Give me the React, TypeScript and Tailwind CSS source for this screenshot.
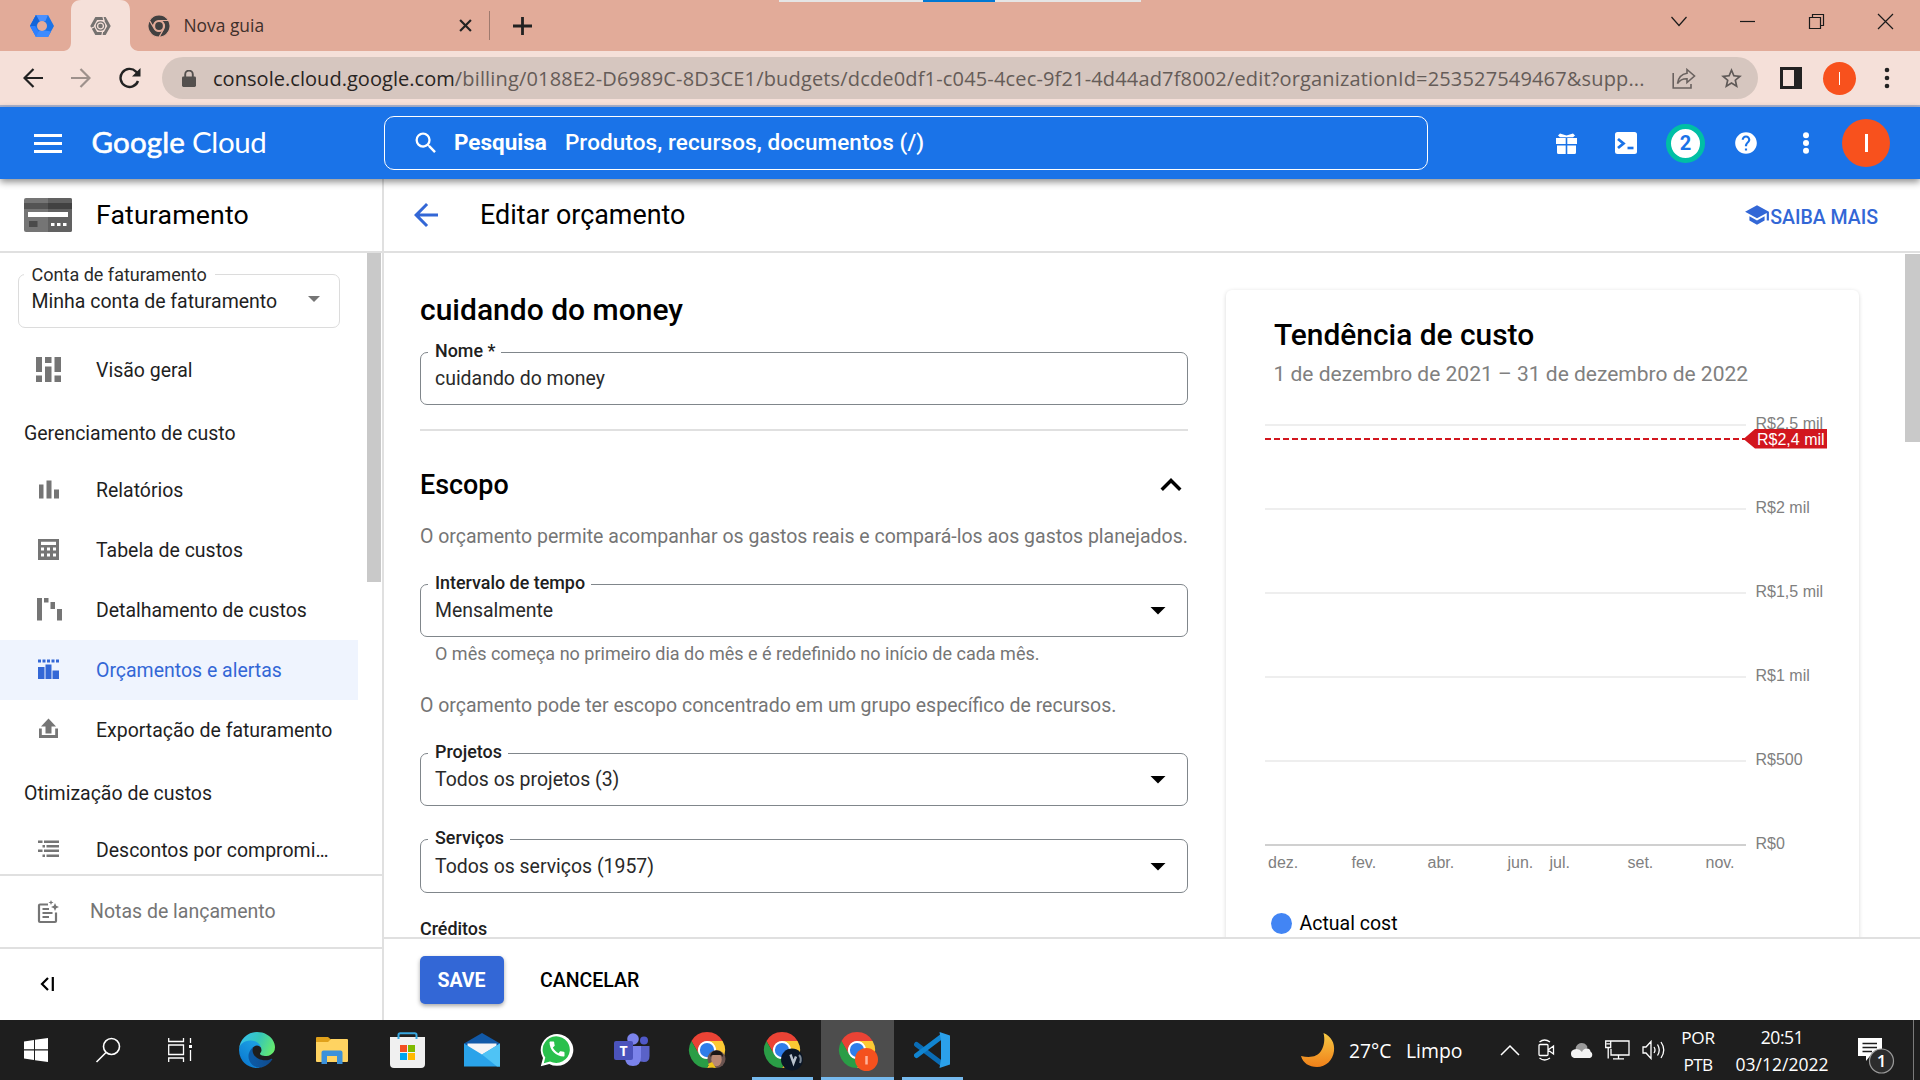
import type { ReactNode } from 'react';
import { MdArrowBack, MdArrowDropDown, MdExpandLess, MdHelp, MdSchool, MdSearch, MdStarBorder, MdCall } from 'react-icons/md';

/* ---------- Browser chrome ---------- */

function CloudHexIcon() {
  return (
    <svg width="24" height="22" viewBox="0 0 24 22">
      <path d="M6 0H18L24 11L18 22H6L0 11Z" fill="#1a73e8" />
      <path d="M6 0H18L15.5 6H8.5L3 5.5Z" fill="#4a90ff" />
      <path d="M0 11L6 22H12L5 11L8.5 5L6 0Z" fill="#2f80ff" />
      <path d="M6 22H18L21 16.5L15 15.5H9Z" fill="#3d8bff" />
      <path d="M0 11L6 0L9.5 6L6 11Z" fill="#1565d8" />
      <circle cx="12" cy="11" r="5" fill="#e2ab99" />
    </svg>
  );
}

function GrayHexIcon() {
  return (
    <svg width="21" height="18" viewBox="0 0 21 18">
      <path d="M6.2 1.5H14.8L19 9L14.8 16.5H6.2L2 9Z" fill="none" stroke="#757270" strokeWidth="3" />
      <path d="M0 12L4 10M13 0L14.200 4M12 18L12.700 14" stroke="#f5e0d9" strokeWidth="1.2" />
      <circle cx="10.5" cy="9" r="4.200" fill="none" stroke="#757270" strokeWidth="1.2" />
      <circle cx="10.5" cy="9" r="2.300" fill="#757270" />
    </svg>
  );
}

const RED = 'M24 12H44.7812a23.9939 23.9939 0 0 0-41.5639.0029L13.6079 30l.0093-.0024A11.9852 11.9852 0 0 1 24 12Z';
const YELLOW = 'M34.3913 30.0029 24.0007 48A23.994 23.994 0 0 0 44.78 12.0031H23.9989l-.0025.0093A11.985 11.985 0 0 1 34.3913 30.0029Z';
const GREEN = 'M13.6086 30.0031 3.218 12.006A23.994 23.994 0 0 0 24.0025 48L34.3931 30.0029l-.0067-.0068a11.9852 11.9852 0 0 1-20.7778.007Z';

function ChromeMono() {
  return (
    <svg width="22" height="22" viewBox="0 0 48 48">
      <g fill="#424040" stroke="#e2ab99" strokeWidth="2.4">
        <path d={RED} />
        <path d={YELLOW} />
        <path d={GREEN} />
      </g>
      <circle cx="24" cy="24" r="12" fill="#e2ab99" />
      <circle cx="24" cy="24" r="8.5" fill="#424040" />
    </svg>
  );
}

function TabStrip() {
  return (
    <div className="relative flex h-[51px] shrink-0 items-center bg-[#e2ab99]">
      <div className="absolute left-[779px] top-0 flex h-[2px] w-[362px] justify-center bg-[#e5e5e5]">
        <div className="-ml-[2px] h-[2px] w-[72px] bg-[#0078d4]" />
      </div>
      <div className="flex w-[64px] justify-end pr-[10px]"><CloudHexIcon /></div>
      <div className="relative flex h-[51px] w-[73px] items-center justify-center">
        <svg className="absolute left-0 top-0" width="77" height="51" viewBox="0 0 77 51">
          <path d="M0 51C5 50 7 47 7 42V11C7 4 10 0 17 0H56C63 0 66 4 66 11V42C66 47 69 50 74 51Z" fill="#f5e0d9" />
        </svg>
        <div className="relative flex"><GrayHexIcon /></div>
      </div>
      <div className="ml-[11px] flex w-[352px] items-center">
        <ChromeMono />
        <span className="-mt-px ml-[13.500px] text-[17.4px] leading-[24px] text-[#3f302b]">Nova guia</span>
      </div>
      <div className="flex w-[341px] items-center">
        <svg className="-ml-[41.500px]" width="13" height="13" viewBox="0 0 12 12"><path d="M1 1L11 11M11 1L1 11" stroke="#222" strokeWidth="2" /></svg>
        <div className="ml-[17.500px] h-[29px] w-px bg-[#9f7a6e]" />
        <svg className="ml-[23px]" width="19" height="18" viewBox="0 0 19 18"><path d="M9.5 0V18M0 9H19" stroke="#222" strokeWidth="2.8" /></svg>
      </div>
      <div className="-mt-[9px] ml-auto flex items-center text-[#1a1a1a]">
        <svg width="68" height="24" viewBox="0 0 68 24"><path d="M26.5 8L34 16.5L41.5 8" fill="none" stroke="currentColor" strokeWidth="1.2" /></svg>
        <svg width="69" height="24" viewBox="0 0 69 24"><path d="M27 12.5H42" stroke="currentColor" strokeWidth="1.2" /></svg>
        <svg width="69" height="24" viewBox="0 0 69 24"><path d="M27.5 8.5H38.5V19.5H27.5ZM30.5 8.5V5.5H41.5V16.5H38.5" fill="none" stroke="currentColor" strokeWidth="1.2" /></svg>
        <svg width="69" height="24" viewBox="0 0 69 24"><path d="M27 5L42 20M42 5L27 20" stroke="currentColor" strokeWidth="1.2" /></svg>
      </div>
    </div>
  );
}

function Toolbar() {
  return (
    <div className="flex h-[56px] shrink-0 items-center border-b-2 border-[#aab4d0] bg-[#f5e0d9]">
      <div className="flex w-[162px] items-center pl-[23px]">
        <svg width="20" height="20" viewBox="0 0 20 20"><path d="M20 10H2M10.5 1L1.5 10L10.5 19" fill="none" stroke="#222" strokeWidth="2.2" /></svg>
        <svg className="ml-[28px]" width="20" height="20" viewBox="0 0 20 20"><path d="M0 10H18M9.5 1L18.5 10L9.5 19" fill="none" stroke="#9e918c" strokeWidth="2.2" /></svg>
        <svg className="ml-[28px]" width="22" height="22" viewBox="0 0 22 22">
          <path d="M19 14A9 9 0 1 1 17 4.6L19.5 7" fill="none" stroke="#222" strokeWidth="2.4" />
          <path d="M21.5 1V9.5H13Z" fill="#222" />
        </svg>
      </div>
      <div className="flex h-[42px] w-[1596px] items-center rounded-full bg-[#d6c6bf] pl-[20px]">
        <svg width="14" height="17" viewBox="0 0 14 17">
          <rect y="6.5" width="14" height="10.5" rx="1.4" fill="#54504e" />
          <path d="M3.2 7V4.4A3.8 3.8 0 0 1 10.8 4.4V7" fill="none" stroke="#54504e" strokeWidth="1.9" />
        </svg>
        <span className="ml-[17px] mt-px w-[1430.500px] whitespace-nowrap text-[20px] leading-[26px] tracking-[0.16px] text-[#655c58]">
          <span className="tracking-[0.040px] text-[#282422]">console.cloud.google.com</span>/billing/0188E2-D6989C-8D3CE1/budgets/dcde0df1-c045-4cec-9f21-4d44ad7f8002/edit?organizationId=253527549467&amp;supp...
        </span>
        <svg className="ml-[28px]" width="24" height="21" viewBox="0 0 24 21">
          <path d="M1.2 5V20H19V16" fill="none" stroke="#6a625f" strokeWidth="1.6" />
          <path d="M15 1.5L22.5 8L15 14.5V10.8C10.500 10.600 8 12 5.500 15.500C6.200 10 9.500 6 15 5.200Z" fill="none" stroke="#6a625f" strokeWidth="1.6" />
        </svg>
        <MdStarBorder className="ml-[23px] text-[25px] text-[#5f5957]" />
      </div>
      <div className="ml-[22px] h-[22px] w-[22px] border-[3px] border-r-[8px] border-[#222]" />
      <div className="ml-[21px] flex h-[33px] w-[33px] items-center justify-center rounded-full bg-[#f8511d]"><div className="h-[13px] w-[1.5px] bg-white" /></div>
      <svg className="ml-[28px]" width="6" height="22" viewBox="0 0 6 22" fill="#222"><circle cx="3" cy="3" r="2.3" /><circle cx="3" cy="11" r="2.3" /><circle cx="3" cy="19" r="2.3" /></svg>
    </div>
  );
}

/* ---------- Console header ---------- */

function Cell({ children }: { children: ReactNode }) {
  return <div className="flex w-[60px] items-center justify-center">{children}</div>;
}

function CloudHeader() {
  return (
    <div className="relative z-10 flex h-[72px] shrink-0 items-center bg-[#1a73e8] text-white shadow-[0_3px_7px_rgba(0,0,0,0.45)]">
      <div className="ml-[34px] flex w-[28px] flex-col gap-[5px]">
        <div className="h-[3px] bg-white" />
        <div className="h-[3px] bg-white" />
        <div className="h-[3px] bg-white" />
      </div>
      <div className="mt-[-2px] ml-[29.500px] flex w-[292.500px] items-center font-[Lato] text-[29.500px] leading-[36px]">
        <span className="tracking-[0.15px] [-webkit-text-stroke:0.6px_white]">Google</span>
        <span className="ml-[7px] tracking-[-0.4px]">Cloud</span>
      </div>
      <div className="flex h-[54px] w-[1044px] items-center rounded-[10px] border border-white pl-[27px] font-[Roboto] text-[22.500px]">
        <MdSearch className="text-[28px]" />
        <span className="ml-[14px] font-bold">Pesquisa</span>
        <span className="ml-[18px] font-medium tracking-[0.09px]">Produtos, recursos, documentos (/)</span>
      </div>
      <div className="ml-auto mr-[24px] flex items-center">
        <Cell>
          <svg width="21" height="21" viewBox="0 0 21 21" fill="white">
            <path d="M2 2.500L4 0.500L10.500 2.500L17 0.500L19 2.500L17 4.200H4ZM0 5H9.700V11H0ZM11.300 5H21V11H11.300ZM1 12.400H9.700V21H2.500Q1 21 1 19.500ZM11.300 12.400H20V19.500Q20 21 18.500 21H11.300Z" />
          </svg>
        </Cell>
        <Cell>
          <svg width="22" height="22" viewBox="0 0 22 22"><rect width="22" height="22" rx="2.5" fill="white" /><path d="M3 7L8.500 11.500L3 16" fill="none" stroke="#1a73e8" strokeWidth="2.800" /><path d="M12.500 16H18.500" stroke="#1a73e8" strokeWidth="2.600" /></svg>
        </Cell>
        <Cell>
          <div className="-ml-px flex h-[39px] w-[39px] items-center justify-center rounded-full border-[5px] border-[#00bfa5] bg-white font-[Roboto] text-[20px] font-bold text-[#1a73e8]">2</div>
        </Cell>
        <Cell><MdHelp className="text-[26px]" /></Cell>
        <Cell>
          <svg width="8" height="22" viewBox="0 0 8 22" fill="white"><circle cx="4" cy="3.200" r="3" /><circle cx="4" cy="11" r="3" /><circle cx="4" cy="18.800" r="3" /></svg>
        </Cell>
        <Cell><div className="flex h-[48px] w-[48px] items-center justify-center rounded-full bg-[#f8511d]"><div className="h-[18px] w-[3px] bg-white" /></div></Cell>
      </div>
    </div>
  );
}

/* ---------- Sidebar ---------- */

const icons: Record<string, ReactNode> = {
  overview: <path d="M0 0H6V15H0ZM9 0H15.500V6H9ZM18.500 0H25V15H18.500ZM9 9.500H15.500V25H9ZM0 18.500H6V25H0ZM18.500 18.500H25V25H18.500Z" />,
  reports: <path d="M3 7.500H7.500V21.500H3ZM10.500 3.500H15.500V21.500H10.500ZM18 12.500H23V21.500H18Z" />,
  table: <path fillRule="evenodd" d="M2 2H23V23H2ZM5 4.800V8H20V4.800ZM5 10.500V13.500H8V10.500ZM11 10.500V13.500H14V10.500ZM17 10.500V13.500H20V10.500ZM5 16.500V19.500H8V16.500ZM11 16.500V19.500H14V16.500ZM17 16.500V19.500H20V16.500Z" />,
  detail: <path d="M1 1H6V23.500H1ZM8 1H12.500V5.500H8ZM14.500 5H19V12H14.500ZM21 12H26V23.500H21Z" />,
  budget: <path d="M2 2.500H5V5.500H2ZM6.500 2.500H9.500V5.500H6.500ZM11 2.500H14V5.500H11ZM15.500 2.500H18.500V5.500H15.500ZM20 2.500H23V5.500H20ZM2 10H8.500V22H2ZM9.500 7.500H15.500V22H9.500ZM16.500 13.500H23V22H16.500Z" />,
  export: <path d="M12.500 1.500L20 9.500H15.500V16.500H9.500V9.500H5ZM3 11.500H5.800V18H19.200V11.500H22V21H3Z" />,
  discounts: <path d="M2 3.500H6.500V6H2ZM8 3.500H23V6H8ZM6.500 8H9V10.500H6.500ZM10.500 8H23V10.500H10.500ZM2 12.500H6.500V15H2ZM8 12.500H23V15H8ZM6.500 17.500H9V20H6.500ZM10.500 17.500H23V20H10.500Z" />,
};

function NavItem({ icon, label, active }: { icon: string; label: string; active?: boolean }) {
  return (
    <div className={active ? 'flex h-[60px] w-[358px] shrink-0 items-center bg-[#eff4fe] text-[#3367d6]' : 'flex h-[60px] w-[358px] shrink-0 items-center text-[#1f1f1f]'}>
      <svg className={active ? 'mb-px ml-[36px]' : 'mb-px ml-[36px] text-[#757575]'} width="26" height="25" viewBox="0 0 26 25" fill="currentColor">{icons[icon]}</svg>
      <span className="ml-[34px] mt-[2px] whitespace-nowrap text-[19.480px]">{label}</span>
    </div>
  );
}

function NavHeading({ children }: { children: ReactNode }) {
  return <div className="flex h-[60px] shrink-0 items-center pl-[24px] pt-[8px] text-[19.500px] text-[#1f1f1f]">{children}</div>;
}

function Sidebar() {
  return (
    <div className="flex w-[384px] shrink-0 flex-col border-r-2 border-[#e0e0e0] font-[Roboto] text-black">
      <div className="flex h-[74px] shrink-0 items-center border-b-2 border-[#e0e0e0]">
        <svg className="ml-[24px]" width="48" height="34" viewBox="0 0 48 34">
          <rect width="48" height="34" rx="2" fill="#757575" />
          <path d="M24 0H46Q48 0 48 2V32Q48 34 46 34H24Z" fill="#616161" />
          <path d="M0 5H24V11H0Z" fill="#545454" />
          <path d="M24 5H48V11H24Z" fill="#424242" />
          <path d="M4 14H44V19H4Z" fill="#fff" />
          <path d="M5 23H13.500V29H5Z" fill="#4a4a4a" />
          <path d="M27 25H30.500V28H27ZM33 25H36.500V28H33ZM39 25H42.500V28H39Z" fill="#fff" />
        </svg>
        <span className="ml-[24px] text-[26.700px] tracking-[0.15px]">Faturamento</span>
      </div>
      <div className="flex min-h-0 flex-1 justify-between overflow-hidden">
        <div className="flex w-[360px] flex-col">
          <div className="relative mb-[12px] ml-[18px] mt-[21px] flex h-[54px] w-[322px] shrink-0 items-center rounded-[7px] border border-[#dcdcdc] pl-[12.500px]">
            <span className="absolute left-[5px] top-[-12px] bg-white pl-[7.500px] pr-[8px] text-[18.050px] leading-[24px] text-[#2a2a2a]">Conta de faturamento</span>
            <span className="mt-[2px] text-[19.500px] text-[#1f1f1f]">Minha conta de faturamento</span>
            <svg className="ml-[31px] mt-[-4px]" width="12" height="6" viewBox="0 0 12 6"><path d="M0 0H12L6 6Z" fill="#757575" /></svg>
          </div>
          <NavItem icon="overview" label="Visão geral" />
          <NavHeading>Gerenciamento de custo</NavHeading>
          <NavItem icon="reports" label="Relatórios" />
          <NavItem icon="table" label="Tabela de custos" />
          <NavItem icon="detail" label="Detalhamento de custos" />
          <NavItem icon="budget" label="Orçamentos e alertas" active />
          <NavItem icon="export" label="Exportação de faturamento" />
          <NavHeading>Otimização de custos</NavHeading>
          <NavItem icon="discounts" label="Descontos por compromi…" />
        </div>
        <div className="mr-px h-[329px] w-[14px] bg-[#c9c9c9]" />
      </div>
      <div className="flex h-[73px] shrink-0 items-center border-t-2 border-[#e0e0e0] text-[#757575]">
        <svg className="ml-[37px]" width="23" height="24" viewBox="0 0 23 24">
          <path d="M11 4.500H3Q2 4.500 2 5.500V21Q2 22 3 22H18Q19 22 19 21V12.500" fill="none" stroke="currentColor" strokeWidth="2.200" />
          <path d="M5.500 9H12M5.500 13H15.500M5.500 17H12" stroke="currentColor" strokeWidth="2" />
          <path d="M18 3L19.200 5.800L22 7L19.200 8.200L18 11L16.800 8.200L14 7L16.800 5.800ZM14 0L14.700 1.800L16.500 2.500L14.700 3.200L14 5L13.300 3.200L11.500 2.500L13.300 1.800Z" fill="currentColor" />
        </svg>
        <span className="ml-[30px] text-[19.500px]">Notas de lançamento</span>
      </div>
      <div className="flex h-[73px] shrink-0 items-center border-t-2 border-[#e0e0e0] pb-px">
        <svg className="ml-[40px]" width="15" height="14" viewBox="0 0 15 14"><path d="M8 1L2 7L8 13" fill="none" stroke="#000" strokeWidth="2.200" /><path d="M12.800 0V14" stroke="#000" strokeWidth="2.200" /></svg>
      </div>
    </div>
  );
}

/* ---------- Form ---------- */

function Field({ label, value, select, className }: { label: string; value: string; select?: boolean; className: string }) {
  return (
    <div className={`relative flex w-[768px] shrink-0 items-center rounded-[7px] border border-[#80868b] pl-[14px] ${className}`}>
      <span className="absolute left-[7px] top-[-14px] bg-white pl-[7px] pr-[6px] text-[17.900px] font-medium leading-[24px] text-[#202020]">{label}</span>
      <span className="text-[19.440px] text-[#2a2a2a]">{value}</span>
      {select && <MdArrowDropDown className="mb-[2px] ml-auto mr-[11px] text-[36px] text-black" />}
    </div>
  );
}

function Form() {
  return (
    <div className="ml-[36px] flex w-[768px] shrink-0 flex-col">
      <div className="mt-[39px] shrink-0 text-[30px] font-medium leading-[36px]">cuidando do money</div>
      <Field className="mt-[24px] h-[53px]" label="Nome *" value="cuidando do money" />
      <div className="mt-[24px] h-[2px] shrink-0 bg-[#e0e0e0]" />
      <div className="mt-[36px] flex h-[36px] shrink-0 items-center justify-between">
        <span className="text-[26.900px] font-medium">Escopo</span>
        <MdExpandLess className="mr-[-4px] text-[42px]" />
      </div>
      <div className="mt-[22px] shrink-0 whitespace-nowrap text-[19.500px] leading-[24px] text-[#757575]">O orçamento permite acompanhar os gastos reais e compará-los aos gastos planejados.</div>
      <Field className="mt-[35px] h-[53px]" label="Intervalo de tempo" value="Mensalmente" select />
      <div className="mt-[5px] shrink-0 pl-[15px] text-[18px] leading-[24px] text-[#757575]">O mês começa no primeiro dia do mês e é redefinido no início de cada mês.</div>
      <div className="mt-[28px] shrink-0 text-[19.500px] leading-[24px] text-[#757575]">O orçamento pode ter escopo concentrado em um grupo específico de recursos.</div>
      <Field className="mt-[35px] h-[53px]" label="Projetos" value="Todos os projetos (3)" select />
      <Field className="mt-[33px] h-[54px] pt-px" label="Serviços" value="Todos os serviços (1957)" select />
      <div className="mt-[28px] shrink-0 text-[17.900px] font-medium leading-[16px] text-[#202020]">Créditos</div>
    </div>
  );
}

/* ---------- Cost trend ---------- */

const gridLines: [string, number][] = [['R$2,5 mil', 25], ['R$2 mil', 109], ['R$1,5 mil', 193], ['R$1 mil', 277], ['R$500', 361], ['R$0', 445]];
const months: [string, number][] = [['dez.', 7], ['fev.', 90.5], ['abr.', 166.5], ['jun.', 246.5], ['jul.', 288.5], ['set.', 366.5], ['nov.', 444.5]];

function CostChart() {
  return (
    <svg className="ml-[35px] mt-[14px] shrink-0 font-['Liberation_Sans',sans-serif] text-[16px]" width="598" height="480" viewBox="0 0 598 480">
      {gridLines.map(([label, y]) => (
        <g key={label}>
          <path d={`M4 ${y}H485`} stroke={y === 445 ? '#d0d0d0' : '#eeeeee'} strokeWidth="2" />
          <text x="494.500" y={y + 4} fill="#808080">{label}</text>
        </g>
      ))}
      <path d="M4 39H485" stroke="#d2161e" strokeWidth="2" strokeDasharray="6 3" />
      <path d="M482.500 39L494 29H566V48.500H494Z" fill="#d2161e" />
      <text x="496" y="44.500" fill="#fff">R$2,4 mil</text>
      {months.map(([label, x]) => <text key={label} x={x} y="468" fill="#808080">{label}</text>)}
    </svg>
  );
}

function TrendCard() {
  return (
    <div className="ml-[38px] mt-[37px] flex h-[720px] w-[633px] shrink-0 flex-col rounded-[6px] shadow-[0_1px_4px_rgba(0,0,0,0.16)]">
      <div className="ml-[48px] mt-[27px] shrink-0 text-[29.900px] font-medium leading-[36px]">Tendência de custo</div>
      <div className="ml-[47.500px] mt-[9px] shrink-0 whitespace-nowrap text-[21px] leading-[24px] text-[#808080]">1 de dezembro de 2021 – 31 de dezembro de 2022</div>
      <CostChart />
      <div className="ml-[45px] mt-[31px] flex shrink-0 items-center">
        <div className="h-[21px] w-[21px] rounded-full bg-[#4285f4]" />
        <span className="ml-[7.500px] mt-px text-[19.500px] leading-[24px]">Actual cost</span>
      </div>
    </div>
  );
}

function Main() {
  return (
    <div className="flex min-w-0 flex-1 flex-col font-[Roboto] text-black">
      <div className="flex h-[74px] shrink-0 items-center border-b-2 border-[#e0e0e0]">
        <MdArrowBack className="ml-[24px] text-[36px] text-[#3367d6]" />
        <span className="ml-[36px] text-[26.900px]">Editar orçamento</span>
        <div className="ml-auto mr-[42px] mt-[5px] flex items-center text-[#3367d6]">
          <MdSchool className="mt-[-5px] text-[26px]" />
          <span className="text-[19.500px] font-medium">SAIBA MAIS</span>
        </div>
      </div>
      <div className="flex min-h-0 flex-1 overflow-hidden">
        <Form />
        <TrendCard />
        <div className="ml-auto mt-px h-[188px] w-[15px] shrink-0 bg-[#c9c9c9]" />
      </div>
      <div className="flex h-[83px] shrink-0 items-center border-t-2 border-[#e0e0e0] text-[19.500px] font-medium">
        <div className="ml-[36px] flex h-[48px] w-[84px] items-center justify-center rounded-[5px] bg-[#3367d6] pr-px pt-[2px] font-bold text-white shadow-[0_2px_4px_rgba(0,0,0,0.35)]">SAVE</div>
        <span className="ml-[36px] mt-[2px]">CANCELAR</span>
      </div>
    </div>
  );
}

/* ---------- Taskbar ---------- */

function ChromeColor({ badge }: { badge: ReactNode }) {
  return (
    <svg width="44" height="44" viewBox="0 0 44 44">
      <g transform="translate(4 4) scale(0.75)">
        <circle cx="24" cy="24" r="13" fill="#fff" />
        <path d={RED} fill="#ea4335" />
        <path d={YELLOW} fill="#fcc934" />
        <path d={GREEN} fill="#2a9d46" />
        <circle cx="24" cy="24" r="9.500" fill="#2f7de9" />
      </g>
      {badge}
    </svg>
  );
}

function TaskCell({ children, state }: { children: ReactNode; state?: 'open' | 'active' }) {
  return (
    <div className="relative flex h-[60px] w-[75px] shrink-0 items-center justify-center">
      {state === 'active' && <div className="absolute inset-y-0 left-px w-[73px] bg-[#4d4d4d]" />}
      {state === 'active' && <div className="absolute bottom-0 left-px h-[3px] w-[73px] bg-[#76b9ed]" />}
      {state === 'open' && <div className="absolute bottom-0 left-[7px] h-[3px] w-[61px] bg-[#76b9ed]" />}
      <div className="relative flex">{children}</div>
    </div>
  );
}

function Taskbar() {
  return (
    <div className="flex h-[60px] shrink-0 items-center bg-[#1e1e1e] text-white">
      <div className="flex w-[219.500px] shrink-0 items-center">
        <div className="flex w-[72px] justify-center">
          <svg width="24" height="24" viewBox="0 0 24 24" fill="#fff"><path d="M0 3.400L10 2V11.300H0ZM11 1.800L24 0V11.300H11ZM0 12.500H10V22L0 20.600ZM11 12.500H24V24L11 22.200Z" /></svg>
        </div>
        <div className="flex w-[72px] justify-center">
          <svg width="26" height="26" viewBox="0 0 26 26"><circle cx="16.500" cy="9.500" r="8" fill="none" stroke="#fff" strokeWidth="1.600" /><path d="M11 15.500L1.500 25" stroke="#fff" strokeWidth="1.600" /></svg>
        </div>
        <div className="flex w-[72px] justify-center">
          <svg width="24" height="24" viewBox="0 0 24 24"><path d="M0.700 0V3.500H15.500V0M0.700 7H15.500V16.500H0.700ZM0.700 24V20H15.500V24M22.500 0V5M22.500 12V23" fill="none" stroke="#fff" strokeWidth="1.300" /><path d="M21 7H24V10H21Z" fill="#fff" /></svg>
        </div>
      </div>
      <TaskCell>
        <svg width="36" height="36" viewBox="0 0 256 256">
          <defs>
            <linearGradient id="edgeA" x1="0.2" y1="0.700" x2="1" y2="0.700"><stop offset="0" stopColor="#0c59a4" /><stop offset="1" stopColor="#114a8b" /></linearGradient>
            <linearGradient id="edgeB" x1="0.700" y1="0.200" x2="0.200" y2="1"><stop offset="0" stopColor="#1b9de2" /><stop offset="1" stopColor="#0a76cf" /></linearGradient>
            <linearGradient id="edgeC" x1="0" y1="0.300" x2="1" y2="0.600"><stop offset="0" stopColor="#35c1f1" /><stop offset="0.500" stopColor="#36c6b8" /><stop offset="1" stopColor="#66eb6e" /></linearGradient>
          </defs>
          <g transform="translate(-4.630 -4.920)">
            <path fill="url(#edgeA)" d="M235.680 195.460a93.730 93.730 0 0 1-10.540 4.710 101.870 101.870 0 0 1-35.900 6.460c-47.320 0-88.540-32.550-88.540-74.320A31.480 31.480 0 0 1 117.130 105c-42.800 1.800-53.800 46.400-53.800 72.530 0 73.880 68.090 81.370 82.760 81.370 7.910 0 19.840-2.300 27-4.560l1.310-.440a128.340 128.340 0 0 0 66.600-52.800 4 4 0 0 0-5.320-5.640z" />
            <path fill="url(#edgeB)" d="M110.340 246.340A79.200 79.200 0 0 1 87.600 225a80.720 80.720 0 0 1 29.530-120c3.120-1.470 8.450-4.130 15.540-4a32.350 32.350 0 0 1 25.690 13 31.880 31.880 0 0 1 6.360 18.660c0-.210 24.460-79.600-80-79.600-43.900 0-80 41.660-80 78.210a130.150 130.150 0 0 0 12.110 56 128 128 0 0 0 156.380 67.110 75.550 75.550 0 0 1-62.780-8z" />
            <path fill="url(#edgeC)" d="M156.940 153.780c-.810 1.050-3.300 2.500-3.300 5.660 0 2.610 1.700 5.120 4.720 7.230 14.380 10 41.490 8.680 41.560 8.680a59.560 59.560 0 0 0 30.270-8.350 61.380 61.380 0 0 0 30.430-52.880c.260-22.410-8-37.310-11.340-43.910C228.090 28.760 182.350 4.920 132.630 4.920a128 128 0 0 0-128 126.200c.480-36.540 36.800-66.050 80-66.050 3.500 0 23.460.340 42 10.070 16.340 8.580 24.900 18.940 30.850 29.210 6.180 10.670 7.280 24.150 7.280 29.520s-2.740 13.330-7.820 19.910z" />
          </g>
        </svg>
      </TaskCell>
      <TaskCell>
        <svg width="32" height="27" viewBox="0 0 32 27">
          <path d="M0 1Q0 0 1 0H12L15 2.500V6H0Z" fill="#e0a11b" />
          <path d="M0 5H12L15 2H31Q32 2 32 3V24Q32 25 31 25H1Q0 25 0 24Z" fill="#ffd361" />
          <path d="M5.500 27V15.500Q5.500 13.500 7.500 13.500H24.500Q26.500 13.500 26.500 15.500V27H21V19H11V27Z" fill="#3b91da" />
        </svg>
      </TaskCell>
      <TaskCell>
        <svg width="35" height="36" viewBox="0 0 35 36">
          <path d="M8.500 8V3Q8.500 1.200 10.300 1.200H24.700Q26.500 1.200 26.500 3V8" fill="none" stroke="#37a7e0" strokeWidth="2" />
          <path d="M0 5H35V32Q35 36 31 36H4Q0 36 0 32Z" fill="#f0f0f0" />
          <path d="M7.500 5H9.500V7H7.500ZM25.500 5H27.500V7H25.500Z" fill="#37a7e0" />
          <path d="M10 13H17V20H10Z" fill="#f25022" /><path d="M18 13H25V20H18Z" fill="#7fba00" />
          <path d="M10 21H17V28H10Z" fill="#00a4ef" /><path d="M18 21H25V28H18Z" fill="#ffb900" />
        </svg>
      </TaskCell>
      <TaskCell>
        <svg width="36" height="34" viewBox="0 0 36 34">
          <path d="M0 10.500L18 0L36 10.500V18H0Z" fill="#1159a8" />
          <path d="M3.500 10.500H32.500V25H3.500Z" fill="#f4f4f6" />
          <path d="M0 10.500L18 21.500L36 10.500V33.500H0Z" fill="#2aa3ea" />
          <path d="M18 21.500L36 10.500V33.500H33Z" fill="#4fc3f5" />
        </svg>
      </TaskCell>
      <TaskCell>
        <div className="relative flex h-[34px] w-[34px] items-center justify-center">
          <svg width="34" height="34" viewBox="0 0 34 34"><path d="M0.800 33.200L3 25A16.300 15.900 0 1 1 9.300 30.900Z" fill="#fff" /><path d="M3.800 30.200L5.300 24.600A13.600 13.300 0 1 1 10 28.500Z" fill="#29c04c" /></svg>
          <MdCall className="absolute left-[7px] top-[6px] text-[20px]" />
        </div>
      </TaskCell>
      <TaskCell>
        <svg width="36" height="34" viewBox="0 0 36 34">
          <circle cx="19" cy="6" r="5.800" fill="#7b83eb" />
          <circle cx="30" cy="7.500" r="4" fill="#5059c9" />
          <path d="M24 13H35.500V23Q35.500 29 30 29Q26 29 24 27Z" fill="#5a62c8" />
          <path d="M11 13H27V24Q27 33 19 33Q11 33 11 24Z" fill="#7b83eb" />
          <rect y="8" width="19" height="19" rx="2" fill="#4b53bc" />
          <text x="9.500" y="22.500" textAnchor="middle" className="text-[14px] font-bold" fill="#fff">T</text>
        </svg>
      </TaskCell>
      <TaskCell>
        <ChromeColor badge={<g><circle cx="31.500" cy="31" r="9" fill="#6b5450" /><ellipse cx="31.500" cy="31.500" rx="5.200" ry="6.800" fill="#b98873" /><path d="M25 29Q26 22 32 22.500Q38 23 38 29L36 27H27Z" fill="#1c1615" /><path d="M23 36Q25 40 31 40L27 34Z" fill="#f0c419" /></g>} />
      </TaskCell>
      <TaskCell state="open">
        <ChromeColor badge={<g><circle cx="32" cy="31.500" r="11" fill="#0b1626" /><path d="M30.500 26.500L33.500 35L36 28.500" fill="none" stroke="#b9c2cc" strokeWidth="2.400" /><path d="M39 27Q42 30 40 35" fill="none" stroke="#7c8896" strokeWidth="2" /></g>} />
      </TaskCell>
      <TaskCell state="active">
        <ChromeColor badge={<g><circle cx="31.500" cy="31.500" r="11.500" fill="#f4511e" /><path d="M31.500 28V36.500" stroke="#ffb39b" strokeWidth="2.500" /></g>} />
      </TaskCell>
      <TaskCell state="open">
        <svg width="36" height="36" viewBox="0 0 36 36">
          <path d="M2.500 12.500L27 31" stroke="#0a6cb5" strokeWidth="5" strokeLinecap="round" />
          <path d="M2.500 23.500L27 5" stroke="#1185d1" strokeWidth="5" strokeLinecap="round" />
          <path d="M25.500 0L36 3.500V32.500L25.500 36L27 27V9Z" fill="#2ba0ea" />
        </svg>
      </TaskCell>

      <div className="ml-auto flex items-center">
        <svg width="36" height="36" viewBox="0 0 36 36">
          <defs><linearGradient id="moon" x1="0" y1="0" x2="0" y2="1"><stop offset="0" stopColor="#f6c944" /><stop offset="1" stopColor="#f08019" /></linearGradient></defs>
          <path d="M23.500 1C31 4 35 11 34 19C33 28 26 35 17 35C9 35 3 31 1 24C10 26 17 25 21 19C24.500 13.500 25 7 23.500 1Z" fill="url(#moon)" />
        </svg>
        <span className="ml-[13px] mt-[2px] w-[57px] text-[19.300px]">27°C</span>
        <span className="mt-[2px] w-[94px] text-[19.400px]">Limpo</span>
        <svg width="20" height="12" viewBox="0 0 20 12"><path d="M1 11L10 2L19 11" fill="none" stroke="#fff" strokeWidth="1.500" /></svg>
        <svg className="ml-[18px]" width="17" height="22" viewBox="0 0 17 22"><path d="M1 6.500Q1 5.500 2 5.500H9Q10 5.500 10 6.500V15.500Q10 16.500 9 16.500H2Q1 16.500 1 15.500ZM10 11L15.500 7V15L10 11M1.500 3Q6.500 -1 12 3M1.500 19Q6.500 23 12 19" fill="none" stroke="#fff" strokeWidth="1.300" /></svg>
        <svg className="ml-[14px]" width="25" height="17" viewBox="0 0 25 17"><path d="M7 9A6 6 0 0 1 18.500 5L16 10H8Z" fill="#9a9a9a" /><path d="M5 16A4.500 4.500 0 0 1 5 7.500Q10 6 13 10Q14 6.500 18 6.500Q21 6.500 21.500 9.500A3.600 3.600 0 0 1 21 16Z" fill="#f3f3f3" /></svg>
        <svg className="ml-[11px]" width="25" height="20" viewBox="0 0 25 20"><path d="M6 1H24V15H6V9M0.700 1H5.700V7.500H0.700ZM3.200 7.500V18.500M8 18.800H19M13.500 15V18.500M1.500 3.800H5" fill="none" stroke="#fff" strokeWidth="1.300" /></svg>
        <svg className="ml-[12px]" width="24" height="20" viewBox="0 0 24 20"><path d="M1 7H4L9 1.500V18.500L4 13H1ZM12 7Q14 10 12 13M15.500 4.500Q19 10 15.500 15.500M19 2Q24.500 10 19 18" fill="none" stroke="#fff" strokeWidth="1.300" /></svg>
        <div className="ml-[6px] mt-px flex w-[52px] flex-col items-center text-[17.200px] leading-[27px]"><span className="tracking-[-0.300px]">POR</span><span className="tracking-[-0.700px]">PTB</span></div>
        <div className="ml-[10px] mt-px flex w-[96px] flex-col items-center text-[17.500px] leading-[27px]"><span className="tracking-[-0.400px]">20:51</span><span>03/12/2022</span></div>
        <svg className="ml-[26.500px] mt-[11px]" width="38" height="38" viewBox="0 0 38 38">
          <path d="M1 1H25V19H13L9 24V19H1Z" fill="#fff" />
          <path d="M5.500 6.500H20M5.500 10.500H20M5.500 14.500H15" stroke="#1e1e1e" strokeWidth="1.300" />
          <circle cx="24.500" cy="24" r="12" fill="#2c2c2c" stroke="#9a9a9a" strokeWidth="1.200" />
          <text x="24.500" y="30" textAnchor="middle" className="text-[17px] font-semibold" fill="#fff">1</text>
        </svg>
        <div className="ml-[18px] mr-[6px] h-[60px] w-[1.500px] bg-[#7a7a7a]" />
      </div>
    </div>
  );
}

export default function App() {
  return (
    <div className="flex h-[1080px] w-[1920px] flex-col overflow-hidden bg-white font-['Open_Sans',sans-serif]">
      <TabStrip />
      <Toolbar />
      <CloudHeader />
      <div className="flex min-h-0 flex-1">
        <Sidebar />
        <Main />
      </div>
      <Taskbar />
    </div>
  );
}
